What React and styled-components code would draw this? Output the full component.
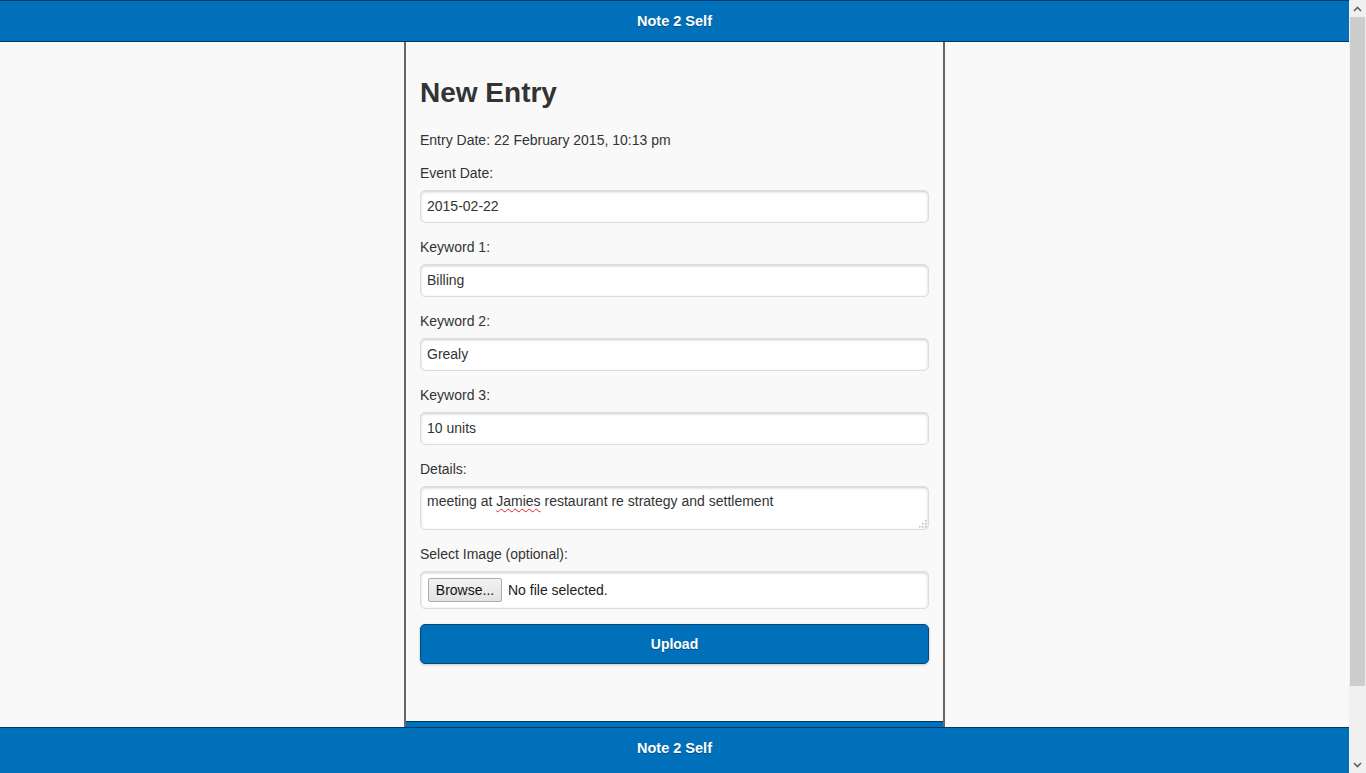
import React from 'react'
import styled, { createGlobalStyle } from 'styled-components'

const blue = '#0070ba'
const darkBlue = '#003a66'

const GlobalStyle = createGlobalStyle`
    html,
    body {
        margin: 0;
        height: 100%;
        overflow: hidden;
        background-color: #f9f9f9;
        font-family: 'Liberation Sans', Arial, sans-serif;
        color: #333333;
    }
`

const Shell = styled.div`
    display: grid;
    grid-template-columns: 1fr 17px;
    height: 100vh;
`

const Main = styled.div`
    display: flex;
    flex-direction: column;
    min-width: 0;
    overflow: hidden;
`

const Bar = styled.div`
    box-sizing: border-box;
    display: flex;
    justify-content: center;
    align-items: center;
    background-color: ${blue};
    color: #ffffff;
    font-size: 14.5px;
    font-weight: 700;
    text-shadow: 0 1px 0 #004c85;
`

const Header = styled(Bar)`
    height: 42px;
    border-top: 1px solid ${darkBlue};
    border-bottom: 1px solid ${darkBlue};
    flex-shrink: 0;
`

const Footer = styled(Bar)`
    position: fixed;
    left: 0;
    right: 17px;
    bottom: 0;
    height: 46px;
    padding-bottom: 6px;
    border-top: 1px solid ${darkBlue};
`

const Column = styled.main`
    box-sizing: border-box;
    width: 541px;
    margin: 0 auto;
    flex: 1;
    display: flex;
    flex-direction: column;
    background-color: #f9f9f9;
    border-left: 2px solid #666666;
    border-right: 2px solid #666666;
`

const Content = styled.div`
    padding: 0 14px 57px 14px;
`

const ColumnFooter = styled.div`
    flex: 1;
    min-height: 41px;
    background-color: ${blue};
    border-top: 1px solid ${darkBlue};
`

const Title = styled.h2`
    margin: 34px 0 21px 0;
    font-size: 28px;
    line-height: 34px;
    font-weight: 700;
    color: #333333;
`

const Text = styled.p`
    margin: 0 0 15px 0;
    font-size: 14px;
    line-height: 18px;
`

const Label = styled.label`
    display: block;
    margin-bottom: 8px;
    font-size: 14px;
    line-height: 18px;
`

const Field = styled.div`
    box-sizing: border-box;
    position: relative;
    width: 100%;
    height: ${(p) => p.h || 33}px;
    margin-bottom: 15px;
    background-color: #ffffff;
    border: 1px solid #dddddd;
    border-radius: 5px;
    box-shadow: inset 0 1px 3px rgba(0, 0, 0, 0.2);
`

const Input = styled.input`
    box-sizing: border-box;
    width: 100%;
    height: 100%;
    padding: 0 6px 2px 6px;
    border: none;
    outline: none;
    background: transparent;
    font-family: inherit;
    font-size: 14px;
    color: #333333;
`

const AreaText = styled.div`
    padding: 5px 6px;
    font-size: 14px;
    line-height: 18px;
`

const Misspelt = styled.span`
    text-decoration: underline wavy #e02020;
    text-decoration-thickness: 1px;
    text-underline-offset: 2px;
`

const Grip = styled.svg`
    position: absolute;
    right: 1px;
    bottom: 1px;
`

const FileRow = styled(Field)`
    display: flex;
    align-items: center;
    gap: 6px;
    padding: 0 7px 1px 7px;
`

const Browse = styled.button`
    box-sizing: border-box;
    width: 74px;
    height: 24px;
    padding: 0;
    border: 1px solid #adadad;
    border-radius: 2px;
    background: linear-gradient(#f2f2f2, #e3e3e3);
    font-family: inherit;
    font-size: 14px;
    color: #111111;
`

const FileName = styled.span`
    font-size: 14px;
    color: #222222;
`

const Upload = styled.button`
    box-sizing: border-box;
    width: 100%;
    height: 40px;
    padding-bottom: 2px;
    border: 1px solid #00477c;
    border-radius: 5px;
    background-color: ${blue};
    box-shadow: 0 1px 3px rgba(0, 0, 0, 0.2);
    color: #ffffff;
    font-family: inherit;
    font-size: 14px;
    font-weight: 700;
    text-shadow: 0 1px 0 #004c85;
`

const Scrollbar = styled.div`
    display: flex;
    flex-direction: column;
    background-color: #f0f0f0;
`

const Arrow = styled.div`
    height: 17px;
    flex-shrink: 0;
    display: flex;
    justify-content: center;
    align-items: center;
`

const Thumb = styled.div`
    flex: 0 0 669px;
    margin: 0 1px;
    background-color: #cdcdcd;
`

const Track = styled.div`
    flex: 1;
`

const Chevron = ({ up }) => (
    <svg width="9" height="6" viewBox="0 0 9 6">
        <path
            d={up ? 'M1 5 L4.5 1.5 L8 5' : 'M1 1 L4.5 4.5 L8 1'}
            fill="none"
            stroke="#606060"
            strokeWidth="1.6"
        />
    </svg>
)

const fields = [
    { label: 'Event Date:', value: '2015-02-22' },
    { label: 'Keyword 1:', value: 'Billing' },
    { label: 'Keyword 2:', value: 'Grealy' },
    { label: 'Keyword 3:', value: '10 units' },
]

const App = () => {
    return (
        <Shell>
            <GlobalStyle />
            <Main>
                <Header>Note 2 Self</Header>
                <Column>
                    <Content>
                        <Title>New Entry</Title>
                        <Text>Entry Date: 22 February 2015, 10:13 pm</Text>
                        {fields.map((f) => (
                            <div key={f.label}>
                                <Label>{f.label}</Label>
                                <Field>
                                    <Input value={f.value} readOnly />
                                </Field>
                            </div>
                        ))}
                        <Label>Details:</Label>
                        <Field h={44}>
                            <AreaText>
                                meeting at <Misspelt>Jamies</Misspelt>{' '}
                                restaurant re strategy and settlement
                            </AreaText>
                            <Grip width="9" height="9" viewBox="0 0 9 9">
                                <g fill="#b5b5b5">
                                    <rect x="7" y="1" width="1.5" height="1.5" />
                                    <rect x="4" y="4" width="1.5" height="1.5" />
                                    <rect x="7" y="4" width="1.5" height="1.5" />
                                    <rect x="1" y="7" width="1.5" height="1.5" />
                                    <rect x="4" y="7" width="1.5" height="1.5" />
                                    <rect x="7" y="7" width="1.5" height="1.5" />
                                </g>
                            </Grip>
                        </Field>
                        <Label>Select Image (optional):</Label>
                        <FileRow h={38}>
                            <Browse>Browse...</Browse>
                            <FileName>No file selected.</FileName>
                        </FileRow>
                        <Upload>Upload</Upload>
                    </Content>
                    <ColumnFooter />
                </Column>
                <Footer>Note 2 Self</Footer>
            </Main>
            <Scrollbar>
                <Arrow>
                    <Chevron up />
                </Arrow>
                <Thumb />
                <Track />
                <Arrow>
                    <Chevron />
                </Arrow>
            </Scrollbar>
        </Shell>
    )
}

export default App
